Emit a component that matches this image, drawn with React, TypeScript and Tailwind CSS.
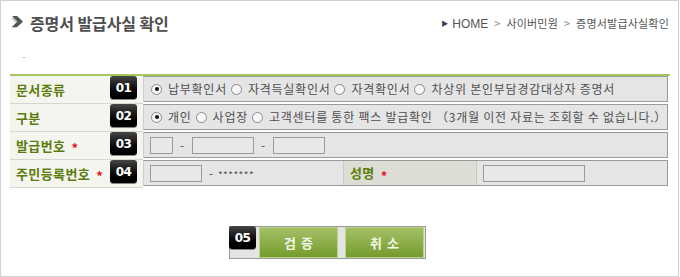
import React from "react";

const font = { fontFamily: '"Noto Sans CJK KR", "Liberation Sans", sans-serif' };

function Radio({ checked }: { checked?: boolean }) {
  return (
    <span className="inline-flex w-[11px] h-[11px] rounded-full border border-[#8a8a8a] bg-[#f7f7f7] items-center justify-center shrink-0">
      {checked && <span className="w-[4px] h-[4px] rounded-full bg-[#111]" />}
    </span>
  );
}

function Badge({ n }: { n: string }) {
  return (
    <div
      className="w-[27px] h-[23px] rounded-[3px] bg-gradient-to-b from-[#474747] via-[#111] to-[#000] text-white text-[12px] font-bold flex items-center justify-center shadow-[0_1px_0_#888]"
      style={{ fontFamily: '"DejaVu Sans", "Liberation Sans", sans-serif', letterSpacing: "-0.5px" }}
    >
      {n}
    </div>
  );
}

function Star() {
  return <span className="text-[#e8131b] text-[13px] font-bold ml-[6px] leading-none mt-[4px]">*</span>;
}

function Row({
  label,
  star,
  n,
  children,
}: {
  label: string;
  star?: boolean;
  n: string;
  children: React.ReactNode;
}) {
  return (
    <div className="flex h-[28px]">
      <div className="w-[100px] shrink-0 bg-[#f4f5ee] border-b border-[#d6d7cf] flex items-center pl-[6px] text-[13px] font-bold text-[#5b7b0b] tracking-[0.4px] whitespace-nowrap">
        {label}
        {star && <Star />}
      </div>
      <div className="w-[33px] shrink-0 bg-[#f4f5ee] border-b border-[#d6d7cf] pl-0">
        <Badge n={n} />
      </div>
      <div className="flex-1 min-w-0 h-[26px] mr-[2px] border border-[#9a9a9a] border-l-[#cfcfcf] bg-[#e5e5e5] flex items-center text-[12px] text-[#505050] tracking-[0.75px] whitespace-nowrap">
        {children}
      </div>
    </div>
  );
}

function Input({ w }: { w: string }) {
  return <span className={`inline-block shrink-0 h-[17px] border border-[#9a9a9a] bg-[#e8e8e8] ${w}`} />;
}

function Opt({ checked, children }: { checked?: boolean; children: React.ReactNode }) {
  return (
    <span className="inline-flex shrink-0 items-center gap-[6px] mr-[4px] whitespace-nowrap">
      <Radio checked={checked} />
      <span>{children}</span>
    </span>
  );
}

export default function App() {
  return (
    <div className="w-[680px] h-[277px] bg-white" style={font}>
      <div className="w-[679px] h-[277px] border border-[#d0d0d0] flex flex-col">
        {/* header */}
        <div className="h-[43px] flex items-center justify-between pl-[9px] pr-[9px]">
          <div className="flex items-center gap-[4px]">
            <svg width="16" height="13" viewBox="0 0 16 13">
              <polygon points="1,2 6,2 12,7 6,12 1,12 6,7" fill="#c9c9c9" />
              <polygon points="2,0 7,0 13,5.5 7,11 2,11 7.5,5.5" fill="#555" />
            </svg>
            <span className="text-[16px] font-bold text-[#4e4e4e] tracking-[-0.1px]">증명서 발급사실 확인</span>
          </div>
          <div className="flex items-center text-[11px] text-[#555] mt-[2px]">
            <span className="text-[7px] text-[#445] mr-[4px]">▶</span>
            <span className="text-[12px]" style={{ fontFamily: '"Liberation Sans", "Noto Sans CJK KR", sans-serif' }}>
              HOME
            </span>
            <span className="mx-[6px] text-[#888]">&gt;</span>
            <span className="tracking-[0.2px]">사이버민원</span>
            <span className="mx-[6px] text-[#888]">&gt;</span>
            <span className="tracking-[0.2px]">증명서발급사실확인</span>
          </div>
        </div>
        {/* dot spacer */}
        <div className="h-[30px] pl-[22px] pt-[13px]">
          <div className="w-[2px] h-[1px] bg-[#aaa]" />
        </div>
        {/* table */}
        <div className="ml-[9px] w-[660px] border-t-2 border-[#a4c65c]">
          <Row label="문서종류" n="01">
            <div className="pl-[7px] flex items-center">
              <Opt checked>납부확인서</Opt>
              <Opt>자격득실확인서</Opt>
              <Opt>자격확인서</Opt>
              <Opt>차상위 본인부담경감대상자 증명서</Opt>
            </div>
          </Row>
          <Row label="구분" n="02">
            <div className="pl-[7px] flex items-center">
              <Opt checked>개인</Opt>
              <Opt>사업장</Opt>
              <Opt>고객센터를 통한 팩스 발급확인 （3개월 이전 자료는 조회할 수 없습니다.）</Opt>
            </div>
          </Row>
          <Row label="발급번호" star n="03">
            <div className="pl-[6px] flex items-center">
              <Input w="w-[23px]" />
              <span className="mx-[7px] text-[#555]">-</span>
              <Input w="w-[62px]" />
              <span className="mx-[7px] text-[#555]">-</span>
              <Input w="w-[52px]" />
            </div>
          </Row>
          <Row label="주민등록번호" star n="04">
            <div className="flex items-center h-full w-full">
              <div className="w-[199px] shrink-0 pl-[6px] flex items-center h-full">
                <Input w="w-[52px]" />
                <span className="ml-[7px] text-[#555]">-</span>
                <span className="ml-[4px] text-[10px] text-[#555] tracking-[0.5px] mt-[2px]">*******</span>
              </div>
              <div className="w-[134px] shrink-0 h-full bg-[#dcddd5] border-x border-[#cbcbc5] flex items-center pl-[6px] text-[13px] font-bold text-[#5b7b0b] tracking-[0.4px]">
                성명
                <Star />
              </div>
              <div className="pl-[6px] flex items-center">
                <Input w="w-[102px]" />
              </div>
            </div>
          </Row>
        </div>
        {/* buttons */}
        <div className="mt-[38px] pl-[228px]">
          <div className="relative w-[197px] h-[33px] border border-[#999] bg-[#e4e4e4] flex items-stretch pl-[29px] gap-[7px]">
            <div className="absolute -top-[1px] -left-[1px]">
              <Badge n="05" />
            </div>
            {["검증", "취소"].map((t) => (
              <div
                key={t}
                className="w-[79px] border border-[#b9d587] bg-gradient-to-b from-[#a3c066] to-[#759c2b] flex items-center justify-center text-[13px] font-bold text-[#f2f6e6] tracking-[5px] pl-[5px]"
              >
                {t}
              </div>
            ))}
          </div>
        </div>
      </div>
    </div>
  );
}
